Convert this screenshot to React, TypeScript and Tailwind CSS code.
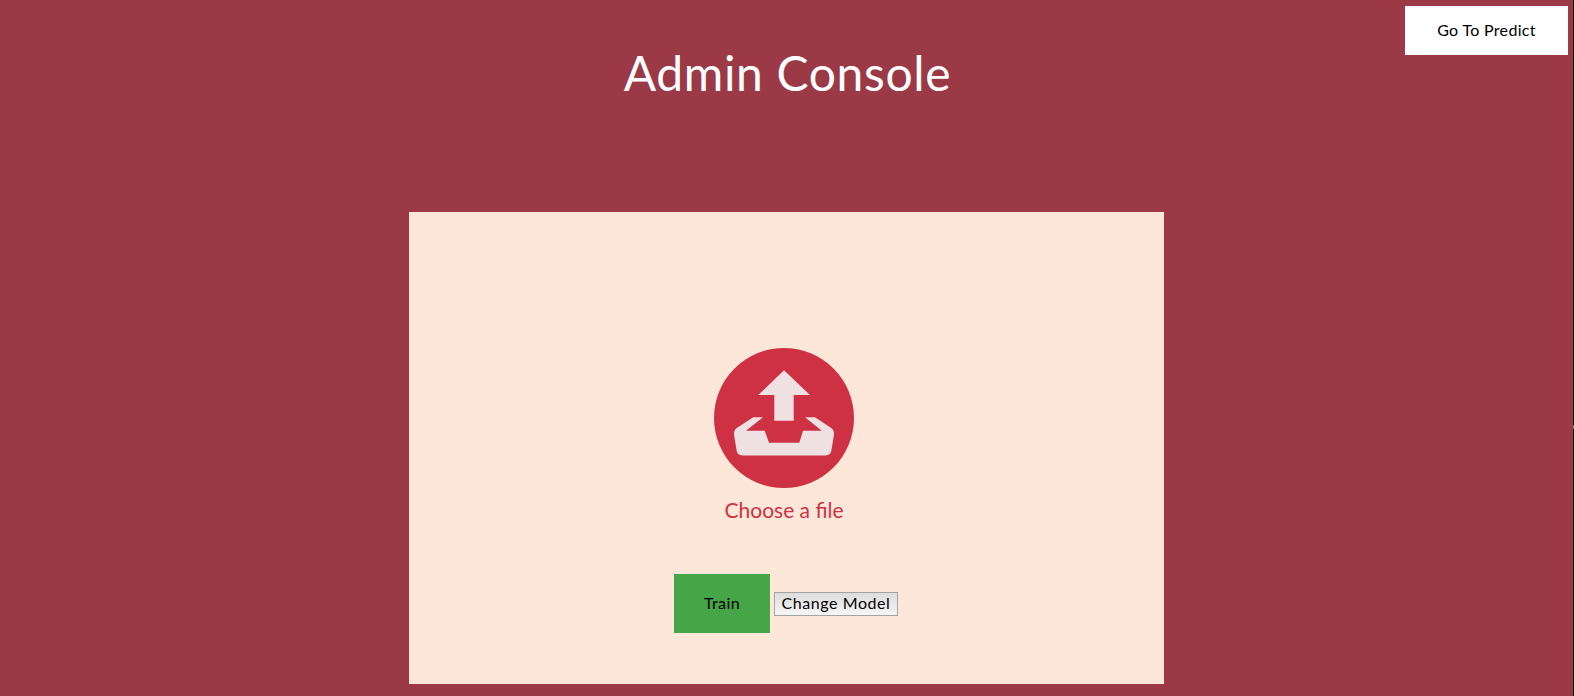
function UploadIcon() {
  return (
    <svg width="140" height="140" viewBox="0 0 140 140" aria-hidden="true">
      <circle cx="70" cy="70" r="70" fill="#cf3144" />
      <g fill="#efe0e1">
        <path d="M70 22.300 96 47H79.700V72.700H60.300V47H44.300Z" />
        <path d="M39.300 69.300H49L32 82.700H50.700L55 94.700H85.300L89 82.700H107.800L91 69.300H101L116.500 79.500Q120.600 82.500 120 86.600L117.400 102.500Q116.500 107.400 111.500 107.400H28.500Q23.500 107.400 22.600 102.500L20 86.600Q19.400 82.500 23.500 79.500Z" />
      </g>
    </svg>
  );
}

export default function App() {
  return (
    <div className="flex h-[696px] bg-[#9b3947] font-['Lato','Open_Sans',sans-serif] text-black">
      <main className="grid min-w-0 flex-1 grid-cols-[1fr_755px_1fr] grid-rows-[212px_472px]">
        <header className="col-start-2 pt-[37px] pl-0.5 text-center">
          <h1 className="whitespace-nowrap text-[48px] leading-[72px] tracking-[0.65px] text-white">Admin Console</h1>
        </header>
        <div className="flex items-start justify-end pt-1.5 pr-[5px]">
          <button className="h-[49px] w-[163px] whitespace-nowrap bg-white pb-0.5 text-[16px] tracking-[0.32px]">
            Go To Predict
          </button>
        </div>
        <section className="col-start-2 flex flex-col items-center bg-[#fde7d9] pt-[136px]">
          <label className="mr-[5px] flex cursor-pointer flex-col items-center text-[#cf3144]">
            <UploadIcon />
            <span className="mt-2 whitespace-nowrap text-[21px] leading-[28px]">Choose a file</span>
          </label>
          <div className="mt-[50px] mr-px flex items-center gap-1">
            <button className="h-[59px] w-24 bg-[#45a547] pb-0.5 text-[16px] tracking-[0.4px]">Train</button>
            <button className="h-6 w-[124px] whitespace-nowrap border border-[#a3a3a3] bg-linear-to-b from-[#dddddd] to-[#f6f6f6] pb-0.5 text-[16px] leading-[20px] tracking-[0.57px]">
              Change Model
            </button>
          </div>
        </section>
      </main>
      <aside className="flex w-px flex-col bg-black pt-[425px]">
        <span className="h-1 bg-[#777777]" />
      </aside>
    </div>
  );
}
